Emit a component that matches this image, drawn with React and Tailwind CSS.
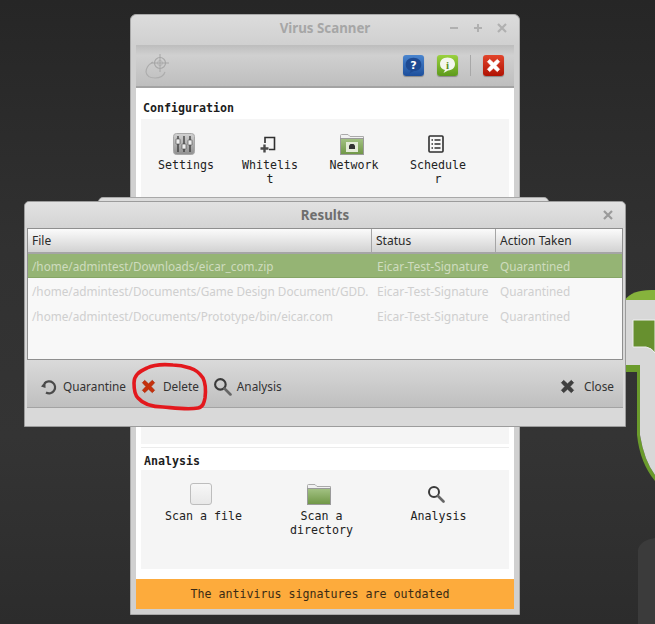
import React from "react";

const sans = "font-['Noto_Sans',sans-serif]";
const mono = "font-['DejaVu_Sans_Mono',monospace]";

function SquareBtn({ cls, children }) {
  return (
    <div className={`w-[21px] h-[21px] rounded-[3px] flex items-center justify-center shadow-[0_1px_1px_rgba(0,0,0,0.3)] ${cls}`}>
      {children}
    </div>
  );
}

function CrossPath({ fill, stroke }) {
  return <path d="M3.5 6 L6 3.5 L10 7.2 L14 3.5 L16.5 6 L12.8 10 L16.5 14 L14 16.5 L10 12.8 L6 16.5 L3.5 14 L7.2 10 Z" fill={fill} stroke={stroke} strokeWidth="0.6" strokeLinejoin="round" />;
}

function Sliders() {
  return (
    <svg width="22" height="22" viewBox="0 0 22 22">
      <defs>
        <linearGradient id="sl" x1="0" y1="0" x2="0" y2="1"><stop offset="0" stopColor="#d2d2d2" /><stop offset="1" stopColor="#8f8f8f" /></linearGradient>
      </defs>
      <rect x="0.5" y="0.5" width="21" height="21" rx="3" fill="url(#sl)" stroke="#a8a8a8" />
      <path d="M5 3V19M11 3V19M17 3V19" stroke="#2c2c2c" strokeWidth="1.2" />
      <rect x="3" y="6" width="4" height="5" rx="0.5" fill="#eee" stroke="#444" strokeWidth="0.6" />
      <rect x="9" y="11" width="4" height="5" rx="0.5" fill="#eee" stroke="#444" strokeWidth="0.6" />
      <rect x="15" y="7" width="4" height="5" rx="0.5" fill="#eee" stroke="#444" strokeWidth="0.6" />
    </svg>
  );
}

function Whitelist() {
  return (
    <svg width="16" height="17" viewBox="0 0 16 17">
      <path d="M5 7V1.5H14.5V13.5H9" fill="none" stroke="#2f2f2f" strokeWidth="1.6" />
      <path d="M0.5 12.5H8.5M4.5 8.5V16.5" stroke="#4a4a4a" strokeWidth="2.4" />
    </svg>
  );
}

function Folder({ id, children, width = 24, height = 21 }) {
  return (
    <svg width={width} height={height} viewBox="0 0 24 21">
      <defs>
        <linearGradient id={id} x1="0" y1="0" x2="0" y2="1"><stop offset="0" stopColor="#a3c284" /><stop offset="1" stopColor="#6f9645" /></linearGradient>
      </defs>
      <path d="M0.5 20.5V1.5Q0.5 0.5 1.5 0.5H8L10 2.5H23.5V20.5Z" fill="#f1f1f1" stroke="#aaa" />
      <rect x="0.5" y="4.5" width="23" height="16" fill={`url(#${id})`} stroke="#9a9a9a" />
      {children}
    </svg>
  );
}

function Schedule() {
  return (
    <svg width="16" height="18" viewBox="0 0 16 18">
      <rect x="1" y="1" width="14" height="16" rx="1" fill="#f8f8f8" stroke="#2f2f2f" strokeWidth="1.6" />
      <path d="M3.5 5H5M6.5 5H12.5M3.5 9H5M6.5 9H12.5M3.5 13H5M6.5 13H12.5" stroke="#2f2f2f" strokeWidth="1.5" />
    </svg>
  );
}

function Lens({ size = 19, color = "#3a3a3a" }) {
  return (
    <svg width={size} height={size} viewBox="0 0 18 18">
      <circle cx="7" cy="7" r="5" fill="none" stroke={color} strokeWidth="2" />
      <path d="M11 11L16.5 16.5" stroke="#666" strokeWidth="2.6" strokeLinecap="round" />
    </svg>
  );
}

function Item({ icon, lines, w = "w-[84px]", gap = "mt-[2px]" }) {
  return (
    <div className={`${w} flex flex-col items-center`}>
      <div className="h-[24px] mr-[5px] flex items-center justify-center">{icon}</div>
      <div className={`${gap} text-center leading-[14px] text-[11.63px] text-[#222]`}>
        {lines.map((l) => <div key={l} className="whitespace-pre">{l}</div>)}
      </div>
    </div>
  );
}

function ToolBtn({ icon, label, cls = "gap-[5px]" }) {
  return (
    <div className={`flex items-center text-[11.8px] text-[#333] ${cls}`}>
      {icon}
      <span>{label}</span>
    </div>
  );
}

const rows = [
  ["/home/admintest/Downloads/eicar_com.zip", true],
  ["/home/admintest/Documents/Game Design Document/GDD.", false],
  ["/home/admintest/Documents/Prototype/bin/eicar.com", false],
];

export default function App() {
  return (
    <div className={`relative w-[655px] h-[624px] overflow-hidden bg-[linear-gradient(180deg,#262626_0%,#313131_40%,#343434_70%,#2c2c2c_100%)] ${mono}`}>
      {/* Desktop logo */}
      <svg className="absolute left-[620px] top-[285px]" width="35" height="339" viewBox="0 0 35 339">
        <path d="M18 339V265Q20 255 35 253V339Z" fill="#3b3b3b" />
        <path d="M5 15Q12 4 35 5V16H5Z" fill="#86b33c" />
        <path d="M5 80H20V150Q24 175 35 190V196Q20 178 17 150V87H5Z" fill="#6b9b2c" />
        <path d="M5 15H35V190Q24 175 20 150V80H5Z" fill="#d8d8d8" />
        <path d="M13 35H35V68Q32 63 26 62H13Z" fill="#67902f" stroke="#efefef" strokeWidth="1" />
      </svg>

      {/* Virus Scanner window */}
      <div className="absolute left-[130px] top-[14px] w-[390px] h-[601px] rounded-t-[6px] bg-[#d0d0d0] border border-[#a8a8a8] flex flex-col">
        <div className="relative h-[30px] shrink-0 flex items-center justify-center pb-[2px] rounded-t-[6px] bg-[linear-gradient(180deg,#dcdcdc,#d0d0d0)]">
          <span className={`${sans} text-[13.3px] font-bold text-[#a6a6a6]`}>Virus Scanner</span>
          <div className="absolute right-[9px] top-[6px] flex gap-[9px] items-center">
            <svg width="15" height="14" viewBox="0 0 15 14"><path d="M3 7H11" stroke="#b0b0b0" strokeWidth="2" /></svg>
            <svg width="15" height="14" viewBox="0 0 15 14"><path d="M3 7H11M7 3V11" stroke="#b0b0b0" strokeWidth="2" /></svg>
            <svg width="15" height="14" viewBox="0 0 15 14"><path d="M3 3L11 11M11 3L3 11" stroke="#b0b0b0" strokeWidth="2.2" /></svg>
          </div>
        </div>
        <div className="mx-[5px] flex-1 flex flex-col min-h-0">
          <div className="h-[43px] shrink-0 flex items-center justify-between pl-[9px] pr-[10px] border-b-2 border-[#a3a3a3] bg-[linear-gradient(180deg,#bdbdbd,#d0d0d0_25%,#bebebe)]">
            <svg width="26" height="28" viewBox="0 0 26 28" className="mt-[3px]">
              <path d="M8 9Q1 13 1 19Q2 25 10 25Q18 25 20 19" fill="none" stroke="#adadad" strokeWidth="1.2" />
              <circle cx="15" cy="10" r="5.5" fill="none" stroke="#a6a6a6" strokeWidth="1.2" />
              <circle cx="15" cy="10" r="2.5" fill="none" stroke="#b5b5b5" />
              <path d="M15 1V19M6 10H24" stroke="#a6a6a6" strokeWidth="1" />
            </svg>
            <div className="flex items-center">
              <SquareBtn cls="bg-[linear-gradient(180deg,#4a85cf,#1d4f9c)]">
                <svg width="19" height="19" viewBox="0 0 17 17">
                  <path d="M8.5 1.5C4.5 1.5 1.5 4 1.5 7.5C1.5 10.5 3.5 12.5 6 13L5 15.5L9 13.4C13 13.2 15.5 11 15.5 7.5C15.5 4 12.5 1.5 8.5 1.5Z" fill="#1e4a92" />
                  <text x="8.5" y="11.2" textAnchor="middle" fontSize="10" fontWeight="700" fill="#fff" fontFamily="DejaVu Sans">?</text>
                </svg>
              </SquareBtn>
              <div className="w-[13px]" />
              <SquareBtn cls="bg-[linear-gradient(180deg,#9ad13f,#5d9a1c)]">
                <svg width="19" height="19" viewBox="0 0 19 19">
                  <path d="M9.5 1.5C5 1.5 2 4.3 2 8C2 11 4 13.5 7 14L5.5 17L10 14.4C14.5 14.2 17 11.5 17 8C17 4.3 14 1.5 9.5 1.5Z" fill="#f4f7ee" />
                  <text x="9.5" y="12.5" textAnchor="middle" fontSize="11" fontWeight="700" fill="#5a8f1d" fontFamily="Liberation Serif">i</text>
                </svg>
              </SquareBtn>
              <div className="w-[1px] h-[21px] bg-[#a8a8a8] mx-[12px]" />
              <SquareBtn cls="bg-[linear-gradient(180deg,#e2452c,#b01203)]">
                <svg width="19" height="19" viewBox="0 0 20 20"><CrossPath fill="#fff" stroke="#fff" /></svg>
              </SquareBtn>
            </div>
          </div>
          <div className="flex-1 bg-white flex flex-col min-h-0">
            <div className="h-[31px] shrink-0 flex items-end pb-[4px] pl-[7px] text-[11.63px] font-bold text-[#1d1d1d] leading-[14px]">Configuration</div>
            <div className="mx-[5px] h-[325px] shrink-0 bg-[#f5f5f5] pl-[3px] pt-[13px] flex items-start">
              <Item icon={<Sliders />} lines={["Settings"]} />
              <Item icon={<Whitelist />} lines={["Whitelis", "t"]} />
              <Item
                icon={
                  <Folder id="f1">
                    <rect x="6" y="8" width="12" height="10" fill="#e4ebd8" />
                    <path d="M9 15V11.5L10.5 10H13.5L15 11.5V15Z" fill="#333" />
                  </Folder>
                }
                lines={["Network"]}
              />
              <Item icon={<Schedule />} lines={["Schedule", "r"]} />
            </div>
            <div className="mx-[5px] mt-[3px] h-[1px] bg-[#ececec]" />
            <div className="h-[22px] shrink-0 flex items-center pt-[4px] pl-[8px] text-[11.63px] font-bold text-[#1d1d1d] leading-[14px]">Analysis</div>
            <div className="mx-[5px] h-[99px] shrink-0 bg-[#f5f5f5] flex items-start pt-[12px] pl-[3px]">
              <Item w="w-[119px]" gap="mt-[3px]" icon={<div className="w-[22px] h-[22px] rounded-[3px] border border-[#bdbdbd] bg-[linear-gradient(180deg,#f7f7f7,#e8e8e8)]" />} lines={["Scan a file"]} />
              <Item w="w-[117px]" gap="mt-[3px]" icon={<Folder id="f2" />} lines={["Scan a", "directory"]} />
              <Item w="w-[117px]" gap="mt-[3px]" icon={<Lens size={18} />} lines={["Analysis"]} />
            </div>
            <div className="h-[10px] shrink-0" />
            <div className="h-[30px] shrink-0 bg-[#fdab3c] flex items-center justify-center pt-[1px] pr-[10px] text-[11.63px] text-[#3a2a14]">The antivirus signatures are outdated</div>
          </div>
          <div className="h-[5px] shrink-0" />
        </div>
      </div>

      {/* Middle window sliver */}
      <div className="absolute left-[98px] top-[197px] w-[451px] h-[229px] rounded-t-[5px] bg-[#dcdcdc] border border-[#a8a8a8]" />

      {/* Results window */}
      <div className={`absolute left-[24px] top-[201px] w-[602px] h-[226px] rounded-t-[5px] border border-[#9c9c9c] bg-[#d9d9d9] flex flex-col ${sans}`}>
        <div className="relative h-[26px] shrink-0 flex items-center justify-center pt-[1px] bg-[linear-gradient(180deg,#e2e2e2,#d4d4d4)] rounded-t-[5px]">
          <span className="text-[13.3px] font-bold text-[#6e6e6e]">Results</span>
          <svg className="absolute right-[11px] top-[7px]" width="12" height="12" viewBox="0 0 12 12"><path d="M2 2L10 10M10 2L2 10" stroke="#9a9a9a" strokeWidth="2.2" /></svg>
        </div>
        <div className="mx-[2px] h-[132px] shrink-0 border border-[#8f8f8f] bg-[#f8f8f8] flex flex-col text-[12px]">
          <div className="h-[25px] shrink-0 flex bg-[linear-gradient(180deg,#fbfbfb,#d2d2d2)] border-b-2 border-[#a5a5a5] text-[#2a2a2a]">
            <div className="w-[344px] pl-[4px] flex items-center border-r border-[#a5a5a5]">File</div>
            <div className="w-[124px] pl-[4px] flex items-center border-r border-[#a5a5a5]">Status</div>
            <div className="flex-1 pl-[4px] flex items-center">Action Taken</div>
          </div>
          {rows.map(([path, sel]) => (
            <div key={path} className={`shrink-0 flex items-center ${sel ? "h-[24px] pt-[2px] bg-[#95b474] text-[#cfdcbf] border-b border-[#86a566]" : "h-[25px] pt-[2px] text-[#cfcfcf]"}`}>
              <div className="w-[344px] pl-[4px] whitespace-nowrap text-[11.75px]">{path}</div>
              <div className="w-[124px] pl-[5px] whitespace-nowrap">Eicar-Test-Signature</div>
              <div className="flex-1 pl-[4px] text-[11.8px]">Quarantined</div>
            </div>
          ))}
        </div>
        <div className="mx-[2px] h-[48px] shrink-0 flex items-center justify-between pt-[6px] bg-[linear-gradient(180deg,#dadada,#bfbfbf)] border-b border-[#a3a3a3] pl-[13px] pr-[9px]">
          <div className="flex items-center gap-[7px]">
            <ToolBtn
              icon={
                <svg width="18" height="18" viewBox="0 0 18 18">
                  <path d="M4.5 5.5A6 6 0 1 1 6 14.5" fill="none" stroke="#4a4a4a" strokeWidth="2.2" />
                  <path d="M1 8.5L5.5 3V10Z" fill="#4a4a4a" />
                </svg>
              }
              label="Quarantine"
            />
            <ToolBtn
              icon={<svg width="19" height="19" viewBox="0 0 20 20"><CrossPath fill="#c6300c" stroke="#a52505" /></svg>}
              label="Delete"
              cls="ml-[6px] gap-[5px]"
            />
            <ToolBtn icon={<Lens />} label="Analysis" cls="ml-[7px] gap-[5px]" />
          </div>
          <ToolBtn icon={<svg width="19" height="19" viewBox="0 0 20 20"><CrossPath fill="#3f3f3f" stroke="#333" /></svg>} label="Close" cls="gap-[7px]" />
        </div>
      </div>

      {/* Hand-drawn annotation */}
      <svg className="absolute left-[128px] top-[360px] pointer-events-none" width="84" height="56" viewBox="0 0 84 56">
        <path d="M45 5C34 4 25 5 19 8C10 12 6 16 6 23C6 30 7 35 10 38C16 45 25 47 35 47C47 48 60 50 70 48C75 47 76 43 77 38C78 30 78 24 75 18C71 12 68 10 62 8C56 6 50 5 45 5Z" fill="none" stroke="#e3181d" strokeWidth="3.6" strokeLinecap="round" />
      </svg>
    </div>
  );
}
